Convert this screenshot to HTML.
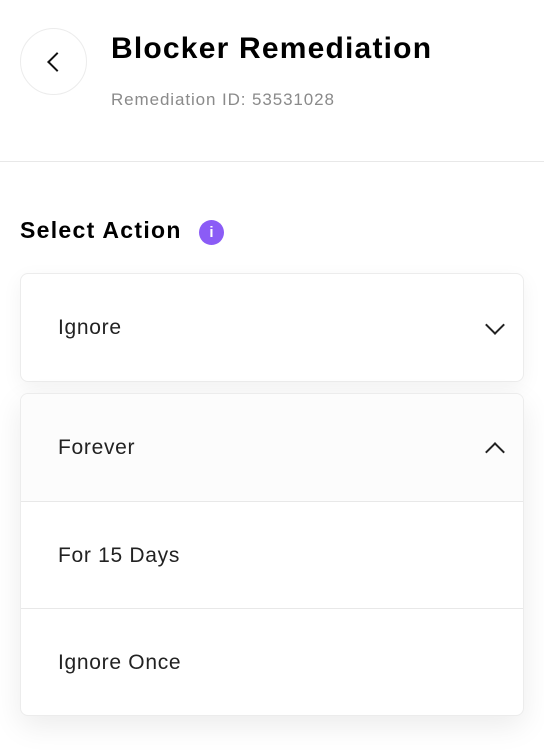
<!DOCTYPE html>
<html><head><meta charset="utf-8"><style>
*{margin:0;padding:0;box-sizing:border-box}
html,body{width:544px;height:752px;background:#fff;overflow:hidden;font-family:"Liberation Sans",sans-serif;color:#1f1f1f}
.back{position:absolute;left:20px;top:28px;width:67px;height:67px;border:1px solid #ececec;border-radius:50%}
.back:after{content:"";position:absolute;left:29px;top:26px;width:12px;height:12px;border-left:2.6px solid #111;border-bottom:2.6px solid #111;transform:rotate(45deg)}
h1{position:absolute;left:111px;top:32px;font-size:30px;font-weight:bold;letter-spacing:1.2px;color:#000}
.sub{position:absolute;left:111px;top:90px;font-size:17px;letter-spacing:0.9px;color:#8a8a8a}
.hr{position:absolute;left:0;top:161px;width:544px;height:1px;background:#e8e8e8}
.sa{position:absolute;left:20px;top:217px;font-size:23px;font-weight:bold;color:#000;letter-spacing:1.3px}
.info{position:absolute;left:199px;top:220px;width:25px;height:25px;border-radius:50%;background:#8b5cf6;color:#fff;font-size:15px;font-weight:bold;text-align:center;line-height:25px}
.box{position:absolute;left:20px;width:504px;border:1px solid #ececec;border-radius:8px;background:#fff;box-shadow:0 6px 20px rgba(0,0,0,0.05);overflow:hidden}
.row{position:relative;height:107px;padding-left:37px;line-height:107px;font-size:21px;letter-spacing:0.7px;color:#222}
.row+.row{border-top:1px solid #e8e8e8}
.dn:after,.up:after{content:"";position:absolute;right:21px;width:12px;height:12px;border-right:2.4px solid #222;border-bottom:2.4px solid #222}
.dn:after{top:44px;transform:rotate(45deg)}
.up:after{top:51px;transform:rotate(-135deg)}
.up{background:#fcfcfc}
</style></head><body>
<div class="back"></div>
<h1>Blocker Remediation</h1>
<div class="sub">Remediation ID: 53531028</div>
<div class="hr"></div>
<div class="sa">Select Action</div>
<div class="info">i</div>
<div class="box" style="top:273px"><div class="row dn">Ignore</div></div>
<div class="box" style="top:393px;box-shadow:0 10px 30px rgba(0,0,0,0.08)">
<div class="row up">Forever</div>
<div class="row">For 15 Days</div>
<div class="row">Ignore Once</div>
</div>
</body></html>
